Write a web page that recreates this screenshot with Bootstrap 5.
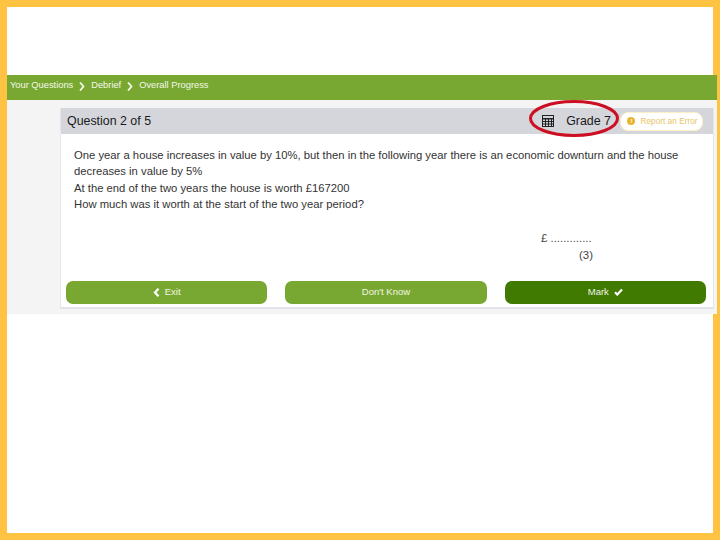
<!DOCTYPE html>
<html lang="en"><head><meta charset="utf-8"><title>Question</title>
<link href="https://cdn.jsdelivr.net/npm/bootstrap@5.3.0/dist/css/bootstrap.min.css" rel="stylesheet">
<style>
html,body{height:100%}
body{font-family:"Liberation Sans",Arial,sans-serif;background:#fff;overflow:hidden}
.frame{height:540px;border:7px solid #fec342;padding-top:68px}
.slide{margin-right:-4px}
.crumbs{height:25px;background:#79a832;color:#f4f8ea;font-size:9.3px;padding:0 0 3px 3px}
.crumbs svg{margin:0 6px 0 6px}
.stage{background:#f4f4f4;height:214px;padding:8px 3px 5px 53px}
.qcard{height:201px;background:#fff;border-radius:0;border:0;border-right:1px solid #e6e7ea;border-bottom:2px solid #e2e3e8;border-left:1px solid #e6e7ea;color:#222}
.qhead{height:26px;background:#d5d6db;padding:0 10px 0 6px;position:relative;color:#1a1a1a;font-size:12.4px}
.gradebox{font-size:12.4px;margin-right:9px;margin-left:12px}
.reportpill{background:#fff;border:1px solid #fdeec8;border-radius:8px;color:#e8c366;font-size:8.3px;height:19px;width:83px;gap:5px;padding-left:2px}
.dotmark{width:8px;height:8px;border-radius:50%;background:#e9b32e;color:#fff;font-size:6px;font-weight:700;line-height:8px;text-align:center}
.ring{position:absolute;left:467px;top:-9px}
.qbody{padding:13px 13px 0;font-size:11.27px;line-height:16.4px;color:#333}
.answer{font-size:11.4px;line-height:17px;width:52px;margin:17px 120px 0 auto;color:#444}
.answer div:last-child{text-align:right}
.actions{padding:0 7px 0 5px;gap:18px;margin-top:17px}
.gobtn{flex:1 1 0;height:23px;border:0;border-radius:7px;background:#79a832;color:#f1f6e4;font-size:9.5px;padding:0;gap:5px}
.gobtn:hover{background:#79a832;color:#f1f6e4}
.gobtn.strong,.gobtn.strong:hover{background:#407a00}
</style></head><body>
<div class="frame">
 <div class="slide">
  <div class="crumbs d-flex align-items-center">
   <span>Your Questions</span><svg width="6" height="9" viewBox="0 0 6 9"><path d="M1 .5 4.500 4.500 1 8.500" fill="none" stroke="#f4f8ea" stroke-width="1.800"/></svg>
   <span>Debrief</span><svg width="6" height="9" viewBox="0 0 6 9"><path d="M1 .5 4.500 4.500 1 8.500" fill="none" stroke="#f4f8ea" stroke-width="1.800"/></svg>
   <span>Overall Progress</span>
  </div>
  <div class="stage">
   <div class="card qcard">
    <div class="qhead d-flex align-items-center">
     <span class="me-auto">Question 2 of 5</span>
     <svg width="12" height="12" viewBox="0 0 12 12"><path fill="#222" d="M0 0h12v12H0z"/><path fill="#d5d6db" d="M1 1h10v2H1zM1 4.500h2v1.500H1zm3 0h2v1.500H4zm3 0h2v1.500H7zm3 0h1v1.500h-1zM1 7h2v1.500H1zm3 0h2v1.500H4zm3 0h2v1.500H7zm3 0h1v1.500h-1zM1 9.500h2V11H1zm3 0h2V11H4zm3 0h2V11H7zm3 0h1V11h-1z"/></svg>
     <span class="gradebox">Grade 7</span>
     <span class="reportpill d-flex align-items-center justify-content-center"><span class="dotmark">!</span>Report an Error</span>
     <svg class="ring" width="94" height="40" viewBox="0 0 94 40"><ellipse cx="46" cy="19.500" rx="43.500" ry="17" fill="none" stroke="#cc0f23" stroke-width="3"/></svg>
    </div>
    <div class="qbody">
     One year a house increases in value by 10%, but then in the following year there is an economic downturn and the house decreases in value by 5%<br>
     At the end of the two years the house is worth £167200<br>
     How much was it worth at the start of the two year period?
    </div>
    <div class="answer"><div>£ .............</div><div>(3)</div></div>
    <div class="actions d-flex">
     <button class="btn gobtn d-flex align-items-center justify-content-center"><svg width="7" height="9" viewBox="0 0 7 9"><path d="M5.500 .8 2 4.500l3.500 3.700" fill="none" stroke="#fff" stroke-width="2.200"/></svg>Exit</button>
     <button class="btn gobtn d-flex align-items-center justify-content-center">Don't Know</button>
     <button class="btn gobtn strong d-flex align-items-center justify-content-center">Mark<svg width="9" height="8" viewBox="0 0 9 8"><path d="M1 4.200 3.300 6.500 8 1.500" fill="none" stroke="#fff" stroke-width="2.200"/></svg></button>
    </div>
   </div>
  </div>
 </div>
</div>
</body></html>
